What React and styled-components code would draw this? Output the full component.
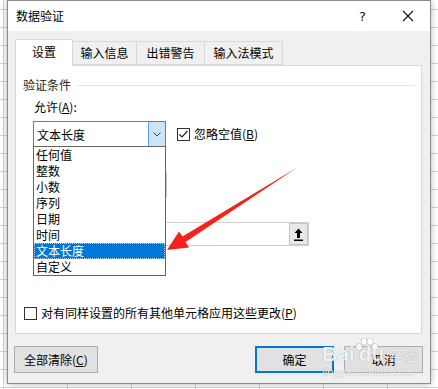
import styled, { createGlobalStyle } from "styled-components";

const GlobalStyle = createGlobalStyle`
  html, body {
    margin: 0;
    padding: 0;
  }
  body {
    font-family: "Noto Sans CJK SC", "Liberation Sans", sans-serif;
    font-size: 12px;
    color: #000;
  }
`;

const Sheet = styled.div`
  position: relative;
  width: 438px;
  height: 389px;
  overflow: hidden;
  background-color: #fff;
  background-image:
    linear-gradient(to right, #d4d4d4 1px, transparent 1px),
    linear-gradient(to bottom, #d4d4d4 1px, transparent 1px);
  background-size: 64px 18px;
  background-position: 3px 9px;
`;

const Dialog = styled.div`
  box-sizing: border-box;
  margin-left: 7px;
  width: 424px;
  height: 384px;
  border: 1px solid #8c8c8c;
  background: #f0f0f0;
  box-shadow: 0 0 6px rgba(0, 0, 0, 0.3);
  display: flex;
  flex-direction: column;
`;

const TitleBar = styled.div`
  height: 30px;
  background: #fff;
  display: flex;
  align-items: center;
  padding-left: 8px;
`;

const Title = styled.div`
  flex: 1;
  font-size: 12px;
  line-height: 16px;
`;

const TitleButton = styled.div`
  width: 45px;
  height: 30px;
  display: flex;
  align-items: center;
  justify-content: center;
  font-family: "DejaVu Sans", sans-serif;
  font-size: 13px;
  color: #111;
`;

const Body = styled.div`
  flex: 1;
  display: flex;
  flex-direction: column;
  padding: 8px 8px 0 7px;
`;

const TabRow = styled.div`
  display: flex;
  align-items: flex-end;
  height: 26px;
  position: relative;
  z-index: 1;
`;

const Tab = styled.div`
  box-sizing: border-box;
  width: ${(p) => p.w}px;
  height: ${(p) => (p.active ? 27 : 24)}px;
  margin-bottom: ${(p) => (p.active ? -1 : 0)}px;
  margin-left: ${(p) => (p.first ? 0 : -1)}px;
  border: 1px solid #d9d9d9;
  border-bottom: ${(p) => (p.active ? "none" : "1px solid #d9d9d9")};
  background: ${(p) => (p.active ? "#fff" : "#f0f0f0")};
  display: flex;
  align-items: center;
  justify-content: center;
  padding-bottom: ${(p) => (p.active ? 2 : 0)}px;
  line-height: 16px;
`;

const Panel = styled.div`
  position: relative;
  box-sizing: border-box;
  height: 269px;
  background: #fff;
  border: 1px solid #d9d9d9;
  display: flex;
  flex-direction: column;
  padding: 11px 6px 12px 7px;
`;

const GroupHeader = styled.div`
  display: flex;
  align-items: center;
  gap: 6px;
  line-height: 16px;
  color: #222;

  &::after {
    content: "";
    flex: 1;
    height: 1px;
    background: #e3e3e3;
  }
`;

const FieldLabel = styled.div`
  margin: 6px 0 0 11px;
  line-height: 16px;
`;

const Row = styled.div`
  display: flex;
  align-items: center;
  gap: 11px;
  margin: ${(p) => p.m || "0"};
`;

const ComboWrap = styled.div`
  position: relative;
  margin-left: 10px;
`;

const Combo = styled.div`
  box-sizing: border-box;
  width: 133px;
  height: 26px;
  border: 1px solid #7a7a7a;
  display: flex;
  align-items: stretch;
  background: #fff;
`;

const ComboText = styled.div`
  flex: 1;
  padding-left: 3px;
  display: flex;
  align-items: center;
`;

const ComboButton = styled.div`
  width: 16px;
  background: #cce4f7;
  border-left: 1px solid #569de5;
  display: flex;
  align-items: center;
  justify-content: center;
`;

const List = styled.div`
  position: absolute;
  top: 25px;
  left: 0;
  z-index: 2;
  box-sizing: border-box;
  width: 133px;
  border: 1px solid #646464;
  background: #fff;
  padding: 0;
`;

const Item = styled.div`
  box-sizing: border-box;
  height: 16px;
  line-height: 14px;
  padding-left: 1px;
  border: 1px ${(p) => (p.selected ? "dotted #b9d3ee" : "solid transparent")};
  background: ${(p) => (p.selected ? "#0078d7" : "transparent")};
  color: ${(p) => (p.selected ? "#fff" : "#000")};
`;

const CheckLabel = styled.label`
  display: flex;
  align-items: center;
  gap: 4px;
  line-height: 16px;
`;

const Box = styled.span`
  box-sizing: border-box;
  width: 13px;
  height: 13px;
  border: 1px solid #333;
  background: #fff;
  display: flex;
  align-items: center;
  justify-content: center;
`;

const HiddenCombo = styled.div`
  box-sizing: border-box;
  width: 133px;
  height: 25px;
  margin: 25px 0 0 11px;
  border: 1px solid #c8c8c8;
`;

const RangeInput = styled.div`
  box-sizing: border-box;
  width: 275px;
  height: 24px;
  margin: 25px 0 0 11px;
  border: 1px solid #d0d0d0;
  display: flex;
  justify-content: flex-end;
`;

const RangeButton = styled.div`
  box-sizing: border-box;
  width: 19px;
  height: 22px;
  background: #e8e8e8;
  border: 1px solid #c6c6c6;
  display: flex;
  align-items: center;
  justify-content: center;
`;

const ApplyRow = styled.div`
  margin: auto 0 0 1px;
`;

const ButtonRow = styled.div`
  display: flex;
  align-items: center;
  margin: 12px -1px 0 -1px;
`;

const Button = styled.div`
  box-sizing: border-box;
  width: ${(p) => p.w}px;
  height: 27px;
  margin-left: ${(p) => p.ml || 0}px;
  background: #e1e1e1;
  border: ${(p) => (p.primary ? "2px solid #0078d7" : "1px solid #adadad")};
  display: flex;
  align-items: center;
  justify-content: center;
  line-height: 16px;
`;

const Arrow = styled.svg`
  position: absolute;
  left: 0;
  top: 0;
  z-index: 5;
  pointer-events: none;
`;

const Watermark = styled.div`
  position: absolute;
  left: 322px;
  top: 334px;
  z-index: 6;
  color: rgba(255, 255, 255, 0.88);
  text-shadow: 0 0 1px rgba(0, 0, 0, 0.35);
  pointer-events: none;
`;

const MarkLine = styled.div`
  display: flex;
  align-items: flex-end;
  height: 32px;
  font-family: "Liberation Sans", sans-serif;
  font-weight: bold;
  font-size: 21px;
  line-height: 24px;
`;

const MarkCn = styled.span`
  font-family: "Noto Sans CJK SC", sans-serif;
  font-weight: normal;
  font-size: 14px;
  margin-left: 5px;
  line-height: 22px;
`;

const MarkSub = styled.div`
  font-family: "Liberation Sans", sans-serif;
  font-size: 11px;
  line-height: 12px;
  letter-spacing: 0.2px;
`;

const Chevron = () => (
  <svg width="8" height="5" viewBox="0 0 8 5">
    <polyline points="0.5,0.5 4,4 7.5,0.5" fill="none" stroke="#444" strokeWidth="1" />
  </svg>
);

const Check = () => (
  <svg width="11" height="11" viewBox="0 0 11 11">
    <polyline points="1.5,5.5 4,8 9.5,2" fill="none" stroke="#222" strokeWidth="1.2" />
  </svg>
);

const Paw = () => (
  <svg width="24" height="26" viewBox="0 0 24 26" style={{ marginBottom: 2 }}>
    <g fill="rgba(255,255,255,0.9)" stroke="rgba(0,0,0,0.25)" strokeWidth="0.6">
      <ellipse cx="4" cy="9" rx="3" ry="3.5" />
      <ellipse cx="9" cy="3.5" rx="3" ry="3.5" />
      <ellipse cx="15" cy="3.5" rx="3" ry="3.5" />
      <ellipse cx="20" cy="9" rx="3" ry="3.5" />
    </g>
  </svg>
);

const items = ["任何值", "整数", "小数", "序列", "日期", "时间", "文本长度", "自定义"];

const tabs = [
  { label: "设置", w: 58 },
  { label: "输入信息", w: 65 },
  { label: "出错警告", w: 69 },
  { label: "输入法模式", w: 79 },
];

const App = () => {
  return (
    <Sheet>
      <GlobalStyle />
      <Dialog>
        <TitleBar>
          <Title>数据验证</Title>
          <TitleButton>?</TitleButton>
          <TitleButton>
            <svg width="12" height="12" viewBox="0 0 12 12">
              <path d="M1 1 L11 11 M11 1 L1 11" stroke="#111" strokeWidth="1.1" />
            </svg>
          </TitleButton>
        </TitleBar>
        <Body>
          <TabRow>
            {tabs.map((t, i) => (
              <Tab key={t.label} w={t.w} active={i === 0} first={i === 0}>
                {t.label}
              </Tab>
            ))}
          </TabRow>
          <Panel>
            <GroupHeader>验证条件</GroupHeader>
            <FieldLabel>
              允许(<u>A</u>):
            </FieldLabel>
            <Row m="6px 0 0 0">
              <ComboWrap>
                <Combo>
                  <ComboText>文本长度</ComboText>
                  <ComboButton>
                    <Chevron />
                  </ComboButton>
                </Combo>
                <List>
                  {items.map((it) => (
                    <Item key={it} selected={it === "文本长度"}>
                      {it}
                    </Item>
                  ))}
                </List>
              </ComboWrap>
              <CheckLabel>
                <Box>
                  <Check />
                </Box>
                <span>
                  忽略空值(<u>B</u>)
                </span>
              </CheckLabel>
            </Row>
            <HiddenCombo />
            <RangeInput>
              <RangeButton>
                <svg width="9" height="13" viewBox="0 0 9 13">
                  <path d="M4.5 0.5 L8.5 5 L6 5 L6 10 L3 10 L3 5 L0.5 5 Z" fill="#000" />
                  <rect x="0" y="11.5" width="9" height="1.5" fill="#000" />
                </svg>
              </RangeButton>
            </RangeInput>
            <ApplyRow>
              <CheckLabel>
                <Box />
                <span>
                  对有同样设置的所有其他单元格应用这些更改(<u>P</u>)
                </span>
              </CheckLabel>
            </ApplyRow>
          </Panel>
          <ButtonRow>
            <Button w={84}>
              <span>
                全部清除(<u>C</u>)
              </span>
            </Button>
            <Button w={80} ml={157} primary>
              确定
            </Button>
            <Button w={79} ml={10}>
              取消
            </Button>
          </ButtonRow>
        </Body>
      </Dialog>
      <Arrow width="438" height="389" viewBox="0 0 438 389">
        <polygon
          points="167,250 179,231.5 182.5,236.5 298,167 185.5,242 189,247.5"
          fill="#f5221b"
        />
      </Arrow>
      <Watermark>
        <MarkLine>
          Bai
          <Paw />
          <span style={{ marginLeft: -20 }}>du</span>
          <MarkCn>经验</MarkCn>
        </MarkLine>
        <MarkSub>jingyan.baidu.com</MarkSub>
      </Watermark>
    </Sheet>
  );
};

export default App;
